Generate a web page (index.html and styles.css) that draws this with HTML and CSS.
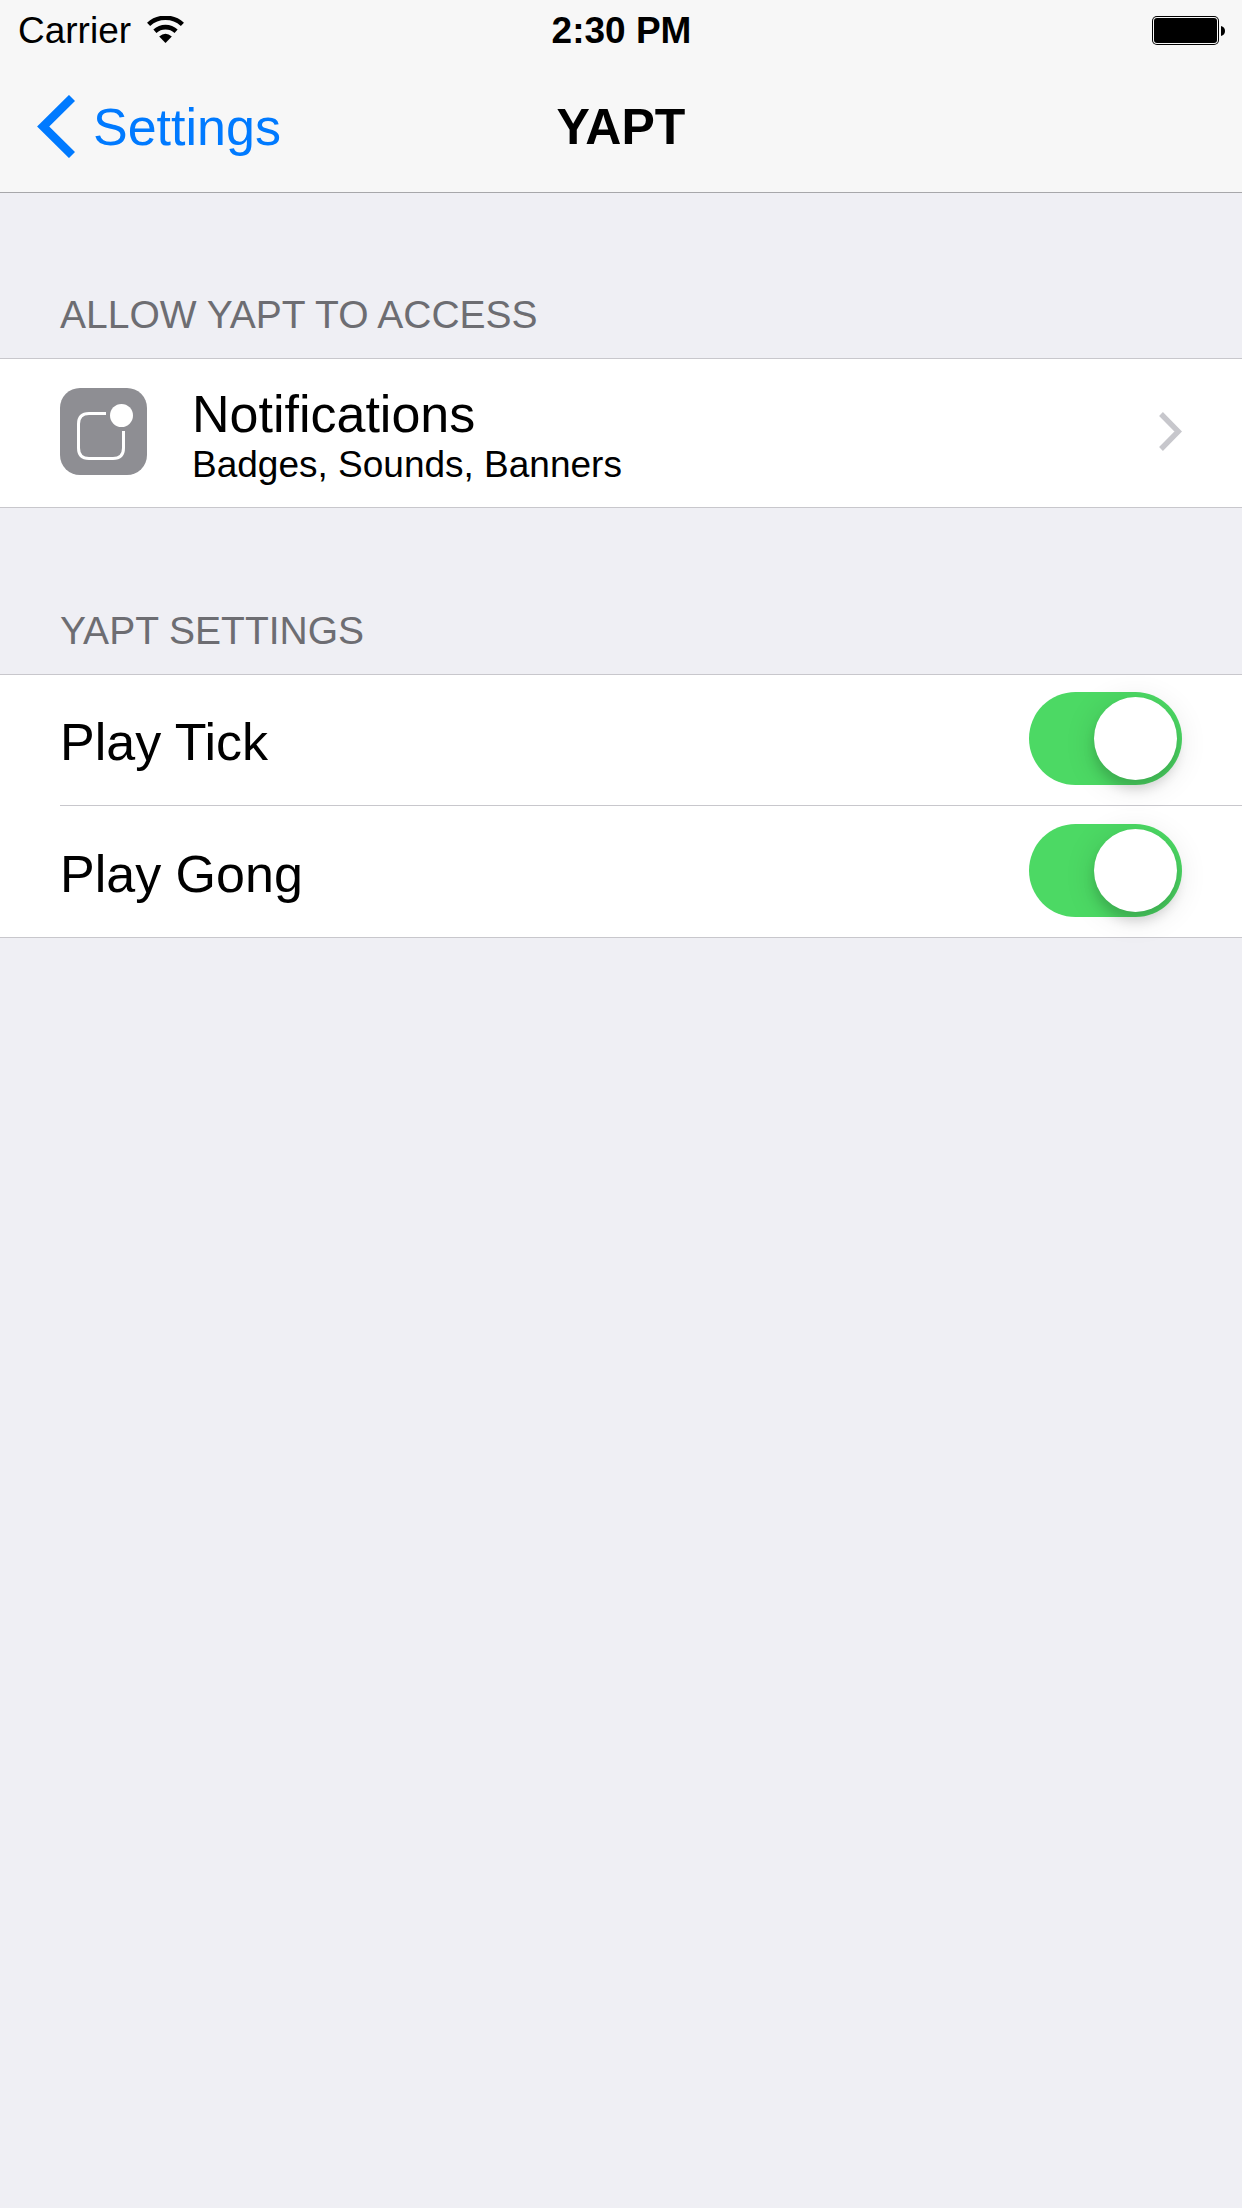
FILE: index.html
```html
<!DOCTYPE html>
<html lang="en">
<head>
  <meta charset="utf-8">
  <meta name="viewport" content="width=device-width, initial-scale=1">
  <title>YAPT</title>
  <link rel="stylesheet" href="styles.css">
</head>
<body>
  <header class="header">
    <div class="status-bar">
      <div class="carrier">
        <span>Carrier</span>
        <svg class="wifi" viewBox="0 0 37 29" aria-hidden="true">
          <path d="M1.6 8.4A25 25 0 0 1 35.4 8.4" fill="none" stroke="#000" stroke-width="4.6"/>
          <path d="M7.9 15.2A15.8 15.8 0 0 1 29.1 15.2" fill="none" stroke="#000" stroke-width="4.6"/>
          <path d="M12.2 20.6Q18.5 15 24.8 20.6L18.5 27Z"/>
        </svg>
      </div>
      <time class="clock">2:30 PM</time>
      <svg class="battery" viewBox="0 0 73 29" aria-hidden="true">
        <rect width="67" height="29" rx="5"/>
        <rect x="1" y="1" width="65" height="27" rx="4" fill="#f7f7f7"/>
        <rect x="2" y="2" width="63" height="25" rx="3"/>
        <path d="M69 10Q73 11 73 15T69 20Z"/>
      </svg>
    </div>
    <nav class="nav-bar">
      <a class="back" href="#settings">
        <svg class="back-icon" viewBox="0 0 38 63" aria-hidden="true">
          <path d="M35 3L6.200 31.500L35 60" fill="none" stroke="#007aff" stroke-width="8.600"/>
        </svg>
        <span>Settings</span>
      </a>
      <h1 class="title">YAPT</h1>
    </nav>
  </header>
  <main>
    <section class="group">
      <h2 class="group-title">ALLOW YAPT TO ACCESS</h2>
      <div class="list">
        <a class="row row-link" href="#notifications">
          <svg class="app-icon" viewBox="0 0 87 87" aria-hidden="true">
            <rect width="87" height="87" rx="20" fill="#8e8e93"/>
            <path d="M46 25.500H29Q18.500 25.500 18.500 36V60Q18.500 70.500 29 70.500H53Q63.500 70.500 63.500 60V43" fill="none" stroke="#fff" stroke-width="3"/>
            <circle cx="61.500" cy="27.500" r="11.500" fill="#fff"/>
          </svg>
          <span class="row-text">
            <span class="label">Notifications</span>
            <span class="detail">Badges, Sounds, Banners</span>
          </span>
          <svg class="disclosure" viewBox="0 0 23 39" aria-hidden="true">
            <path d="M2 2L19.300 19.500L2 37" fill="none" stroke="#c7c7cc" stroke-width="5.400"/>
          </svg>
        </a>
      </div>
    </section>
    <section class="group">
      <h2 class="group-title">YAPT SETTINGS</h2>
      <div class="list">
        <div class="row">
          <label class="label" for="play-tick">Play Tick</label>
          <input class="switch" id="play-tick" type="checkbox" role="switch" checked>
        </div>
        <div class="row">
          <label class="label" for="play-gong">Play Gong</label>
          <input class="switch" id="play-gong" type="checkbox" role="switch" checked>
        </div>
      </div>
    </section>
  </main>
</body>
</html>
```

FILE: styles.css
```css
* {
  box-sizing: border-box;
}

body {
  margin: 0;
  min-height: 100vh;
  background: #efeff4;
  color: #000;
  font-family: "Liberation Sans", Arial, sans-serif;
}

a {
  color: inherit;
  text-decoration: none;
}

svg {
  display: block;
  flex: none;
}

.header {
  background: #f7f7f7;
  border-bottom: 1px solid #a7a7aa;
}

.status-bar,
.nav-bar {
  display: grid;
  grid-template-columns: 1fr auto 1fr;
  align-items: center;
}

.status-bar {
  height: 61px;
  padding: 0 17px 0 18px;
  font-size: 37px;
}

.carrier {
  display: flex;
  align-items: center;
  gap: 16px;
}

.wifi {
  width: 37px;
  height: 29px;
}

.clock {
  font-weight: bold;
}

.battery {
  width: 73px;
  height: 29px;
  justify-self: end;
}

.nav-bar {
  height: 131px;
  padding: 0 37px;
}

.back {
  display: flex;
  align-items: center;
  gap: 18px;
  color: #007aff;
  font-size: 52px;
}

.back-icon {
  width: 38px;
  height: 63px;
}

.title {
  margin: 0;
  font-size: 50px;
}

.group {
  padding-top: 100px;
}

.group + .group {
  padding-top: 101px;
}

.group-title {
  margin: 0;
  padding: 0 60px 21px;
  color: #6d6d72;
  font-size: 39px;
  font-weight: normal;
  line-height: 44px;
}

.list {
  padding-left: 60px;
  background: #fff;
  border: solid #c8c7cc;
  border-width: 1px 0;
}

.row {
  display: flex;
  align-items: center;
  justify-content: space-between;
  min-height: 130px;
  padding-right: 60px;
}

.row + .row {
  border-top: 1px solid #c8c7cc;
  min-height: 132px;
}

.row > .label {
  padding-top: 4px;
}

.row-link {
  min-height: 148px;
  padding-bottom: 3px;
}

.app-icon {
  width: 87px;
  height: 87px;
}

.row-text {
  display: flex;
  flex: 1;
  flex-direction: column;
  padding: 8px 0 0 45px;
}

.label {
  font-size: 52px;
  line-height: 58px;
}

.detail {
  font-size: 37px;
  line-height: 44px;
}

.disclosure {
  width: 23px;
  height: 39px;
}

.switch {
  display: flex;
  justify-content: flex-end;
  flex: none;
  width: 153px;
  height: 93px;
  margin: 0 0 3px;
  padding: 5px;
  appearance: none;
  background: #4cd964;
  border-radius: 47px;
}

.switch::before {
  content: "";
  width: 83px;
  height: 83px;
  background: #fff;
  border-radius: 50%;
  box-shadow: 0 9px 12px rgba(0, 0, 0, 0.14), 0 5px 32px rgba(0, 0, 0, 0.12);
}

.switch:not(:checked) {
  justify-content: flex-start;
  background: #e5e5ea;
}
```
